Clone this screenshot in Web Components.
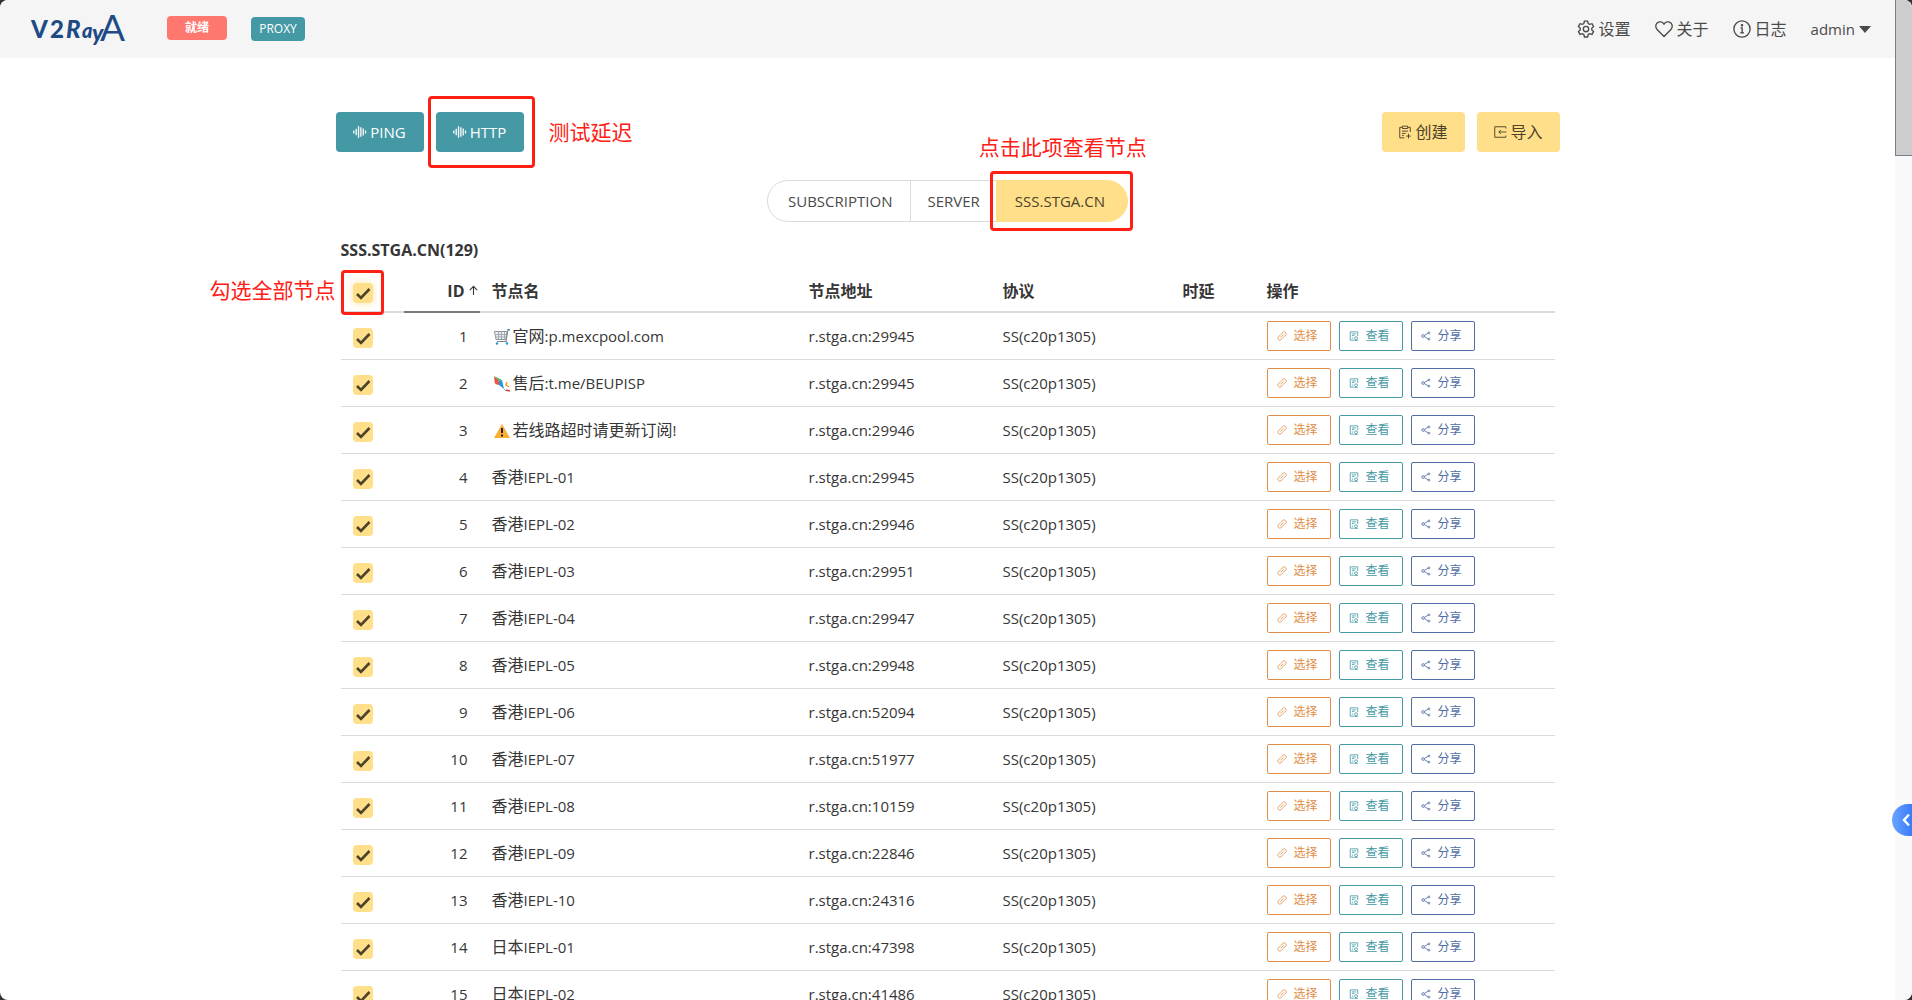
<!DOCTYPE html>
<html lang="zh-CN">
<head>
<meta charset="utf-8">
<title>v2rayA</title>
<style>
html,body{margin:0;height:100%;overflow:hidden;background:#333}
body{font-family:"Open Sans","Noto Sans CJK SC",sans-serif;font-size:15px;line-height:24px;color:#363636}
</style>
</head>
<body>
<app-window></app-window>
<script>
const ICONS = {
  gear:'<path d="M9.900 1.500h4.200l.8 3.200 1.900 1.100 3.200-.9 2.100 3.700-2.400 2.300v2.300l2.400 2.300-2.100 3.700-3.200-.9-1.900 1.100-.8 3.200H9.900l-.8-3.200-1.900-1.100-3.200.9-2.100-3.700 2.400-2.300v-2.300L1.900 8.600 4 4.900l3.200.9 1.900-1.100z"/><circle cx="12" cy="12.100" r="3.600"/>',
  heart:'<path d="M12 22 2.800 12.600C.3 10 .5 6.200 2.800 4 5.500 1.500 9.800 2 12 5.400 14.200 2 18.500 1.500 21.200 4c2.300 2.200 2.500 6 0 8.600z"/>',
  info:'<circle cx="12" cy="12" r="10.800"/><path d="M10 10.500h2.200v6.500M9.800 17h4.600"/><circle cx="12" cy="7" r=".8" fill="currentColor"/>',
  wave:'<path stroke-width="2.200" d="M1.500 9.500v5M5.500 6.500v11M9.500 2v20M13.500 4v16M17.500 6v12M21.500 9.500v5"/>',
  clip:'<path d="M7 4H3v18h8M17 4h4v8M7.500 2h9v4h-9zM7 10.500h10M7 14.500h6M7 18h3M18 15v8M14 19h8"/>',
  enter:'<path d="M22 6V3H3v18h19v-3M10 12h13M13.500 8.500 10 12l3.500 3.500"/>',
  link:'<path d="M8.500 15.500l7-7M9 8.500l6-6c3.500-2.500 9 3 6.500 6.500l-6 6M15 15.500l-6 6c-3.500 2.500-9-3-6.500-6.500l6-6"/>',
  view:'<path d="M12 22H3V2h18v10M7 7h10M7 11h6M7 17h3"/><circle cx="17" cy="17.500" r="3.500"/><path d="M13 23h8"/>',
  share:'<circle cx="5" cy="12" r="3.200"/><circle cx="19" cy="4.500" r="2.200"/><circle cx="19" cy="19.500" r="2.200"/><path d="m8 10.500 9-5M8 13.500l9 5"/>',
  up:'<path d="M12 22V3M4 11l8-8 8 8"/>'
};
const icon = (n, s, w = 2) => `<svg width="${s}" height="${s}" viewBox="0 0 24 24" fill="none" stroke="currentColor" stroke-width="${w}" aria-hidden="true">${ICONS[n]}</svg>`;
/* Chinese runs are set one size above the Latin ones */
const mixed = t => t.replace(/[\u4e00-\u9fff]+/g, m => `<span class="zh">${m}</span>`);
const BASE = `<style>*{box-sizing:border-box}:host{display:block}button,a,input{font:inherit;color:inherit}button{cursor:pointer;border:0;margin:0}a{text-decoration:none}svg{flex:none}.zh{font-size:16px}</style>`;
const define = (name, html, setup) => customElements.define(name, class extends HTMLElement {
  connectedCallback() {
    if (this.shadowRoot) return;
    this.attachShadow({mode:'open'}).innerHTML = BASE + (typeof html === 'function' ? html(this) : html);
    if (setup) setup(this);
  }
});

define('red-note', `<style>
:host{position:absolute;border:3px solid #ff2015;border-radius:4px;pointer-events:none}
span{position:absolute;color:#ff2015;font-size:21px;line-height:28px;font-weight:400;white-space:nowrap}
:host([side=right]) span{left:100%;top:50%;margin:-14px 0 0 17px}
:host([side=left]) span{right:100%;top:50%;margin:-17px 8px 0 0}
:host([side=top]) span{bottom:100%;left:-14px;margin-bottom:13px}
</style><span><slot></slot></span>`);

define('brand-logo', `<style>svg{display:block}text{fill:#1f4b85;font-family:Lato,sans-serif;font-weight:900}.slant{font-style:italic}</style>
<svg width="96" height="44" viewBox="0 0 96 44" role="img" aria-label="V2RayA"><text x="1" y="31" font-size="24">V<tspan x="20">2</tspan><tspan x="36" class="slant">R</tspan><tspan x="52" font-size="20" class="slant">a</tspan><tspan x="62" y="34" font-size="23" class="slant">y</tspan><tspan x="70" y="34" font-size="37" font-weight="400">A</tspan></text></svg>`);

define('status-tag', `<style>:host{border-radius:4px;font-size:12px;line-height:24px;color:#fff;text-align:center;background:var(--tag)}</style><slot></slot>`);

define('nav-link', el => `<style>a{display:flex;align-items:center;gap:4px;color:#4a4a4a;font-size:var(--nav-size,16px)}i{border:6px solid transparent;border-top:7px solid #4a4a4a;border-bottom:0}</style>
<a href="#">${el.hasAttribute('icon') ? icon(el.getAttribute('icon'), 18, 1.800) : ''}<slot></slot>${el.hasAttribute('caret') ? '<i></i>' : ''}</a>`);

define('top-bar', `<style>
:host{background:#f5f5f5}
nav{height:58px;display:flex;align-items:center;padding:0 24px 0 30px}
.ready{width:60px;margin:-2px 24px 0 41px;font-weight:700;--tag:#ff7870}
.proxy{width:54px;--tag:#4599a5}
.links{margin-left:auto;display:flex;gap:24px}
.user{--nav-size:15px}
</style><nav><brand-logo></brand-logo><status-tag class="ready">就绪</status-tag><status-tag class="proxy">PROXY</status-tag>
<div class="links"><nav-link icon="gear">设置</nav-link><nav-link icon="heart">关于</nav-link><nav-link icon="info">日志</nav-link><nav-link class="user" caret>admin</nav-link></div></nav>`);

define('tool-button', el => `<style>
:host{position:relative}
button{display:flex;align-items:center;justify-content:center;gap:3px;height:40px;min-width:88px;border-radius:4px;background:#4599a5;color:#fff;padding:0 16px}
:host([tone=warm]) button{background:#ffdf8a;color:#4d4329;min-width:83px;padding:0 8px;font-size:16px}
</style><button type="button">${icon(el.getAttribute('icon'), 14, 1.600)}<slot></slot></button><slot name="note"></slot>`);

define('action-bar', `<style>
:host{display:flex;gap:12px}
.gap{flex:1}
red-note{left:-8px;right:-11px;top:-16px;bottom:-16px}
</style><tool-button icon="wave">PING</tool-button><tool-button icon="wave">HTTP<red-note slot="note" side="right">测试延迟</red-note></tool-button><div class="gap"></div>
<tool-button tone="warm" icon="clip">创建</tool-button><tool-button tone="warm" icon="enter">导入</tool-button>`);

define('server-tabs', `<style>
:host{display:flex;justify-content:center}
div{display:flex;position:relative}
a{height:42px;line-height:40px;border:1px solid #dbdbdb;padding:0 16px;margin-right:-1px;color:#4a4a4a}
a:first-child{border-radius:21px 0 0 21px;padding:0 18px 0 20px}
a.on{border-radius:0 21px 21px 0;background:#ffdf8a;border-color:#ffdf8a;color:#4d4329;padding:0 22px 0 18px;margin:0}
section{position:relative;display:flex}
red-note{left:-6px;right:-5px;top:-9px;bottom:-9px}
</style><div><a href="#">SUBSCRIPTION</a><a href="#">SERVER</a><section><a class="on" href="#">SSS.STGA.CN</a><red-note side="top">点击此项查看节点</red-note></section></div>`);

define('check-box', el => `<style>
label{position:relative;display:block;width:20px;height:20px}
input{appearance:none;display:block;margin:0;width:20px;height:20px;border-radius:4px;background:#ffdf8a}
:host([glow]) input{box-shadow:0 0 8px #ffdf8acc}
svg{position:absolute;inset:0;pointer-events:none}
</style><label><input type="checkbox" checked aria-label="${el.getAttribute('label')}"><svg width="20" height="20" viewBox="0 0 20 20" fill="none" stroke="#4d4329" stroke-width="2.600"><path d="m4 11 4 4 8.500-9"/></svg></label>`);

define('row-action', el => `<style>
button{display:flex;align-items:center;justify-content:center;gap:6px;width:64px;height:30px;border:1px solid var(--tone);border-radius:2px;background:#fff;color:var(--tone);font-size:12px;padding:0 2px 0 0}
</style><button type="button">${icon(el.getAttribute('icon'), 10)}<slot></slot></button>`);

define('name-mark', el => {
  const art = {
    cart:'<path fill="#eceff1" stroke="#8c969c" d="M.5 2.500h12.500l-1 8H2z"/><path fill="none" stroke="#a2abb0" d="M1.500 5.500h11M2 8h10M4.500 3v7M7.500 3v7M10.500 3v7"/><path fill="none" stroke="#7d878d" d="m12 12 2-11M3 12.500h10"/><path fill="none" stroke="#2e7fb8" stroke-width="1.500" d="m13.500 1 2.500-.5"/><circle cx="3" cy="14.500" r="1.200" fill="#2196d8"/><circle cx="13" cy="14.500" r="1.200" fill="#2196d8"/>',
    kite:'<path fill="#f04a3c" d="m0 0 1 8 4-3z"/><path fill="#4caf50" d="m0 0 8 4-3 1z"/><path fill="#1e9be0" d="m5 5 3-1 2 9-5-4z"/><path fill="#f04a3c" d="m1 8 4-3 0 4z"/><path fill="none" stroke="#9aa" d="m10 13 2 2"/><path fill="none" stroke="#f0a020" stroke-width="1.500" d="m13 6-1 3 3 2"/><path fill="none" stroke="#e53935" stroke-width="1.500" d="m12 14 4 1"/>',
    warn:'<path fill="#fbae2f" d="M8 1 16 15H0z"/><path stroke="#222" stroke-width="2" d="M8 5v5M8 11.500v2"/>'
  };
  return `<style>:host{display:inline-block;vertical-align:-3px;margin:0 3px 0 2px}svg{display:block}</style><svg width="16" height="16" viewBox="0 0 16 16">${art[el.getAttribute('kind')]}</svg>`;
});

const ROWS = [
 ['官网:p.mexcpool.com',29945,'cart'],['售后:t.me/BEUPISP',29945,'kite'],['若线路超时请更新订阅!',29946,'warn'],
 ['香港IEPL-01',29945],['香港IEPL-02',29946],['香港IEPL-03',29951],['香港IEPL-04',29947],['香港IEPL-05',29948],
 ['香港IEPL-06',52094],['香港IEPL-07',51977],['香港IEPL-08',10159],['香港IEPL-09',22846],['香港IEPL-10',24316],
 ['日本IEPL-01',47398],['日本IEPL-02',41486]
];
define('node-table', () => `<style>
h2{margin:0;font-size:16px;line-height:24px;font-weight:700}
table{width:100%;margin-top:8px;border-collapse:separate;border-spacing:0;table-layout:fixed}
th,td{text-align:left;padding:0 12px;white-space:nowrap}
th{height:43px;border-bottom:2px solid #dbdbdb;font-weight:700;font-size:16px;line-height:24px}
td{height:47px;border-bottom:1px solid #dbdbdb}
.c{width:63px;position:relative}.i{width:76px}.n{width:317px}.a{width:194px}.p{width:180px}.d{width:84px}
th.i{border-color:#7a7a7a;padding:0}
th.i div{display:flex;justify-content:flex-end;align-items:center;gap:3px;padding-right:1px}
td.i{text-align:right}
th check-box{padding-top:4px}td check-box{padding-top:3px}
.ops{display:flex;gap:8px}
red-note{left:0;width:43px;top:0;height:45px}
</style><h2>SSS.STGA.CN(129)</h2>
<table><thead><tr><th class="c"><check-box glow label="全选"></check-box><red-note side="left">勾选全部节点</red-note></th><th class="i"><div>ID${icon('up', 11, 2.400)}</div></th><th class="n">节点名</th><th class="a">节点地址</th><th class="p">协议</th><th class="d">时延</th><th>操作</th></tr></thead>
<tbody>${ROWS.map(([n, p, k], i) => `<tr><td class="c"><check-box label="${i + 1}"></check-box></td><td class="i">${i + 1}</td><td>${k ? `<name-mark kind="${k}"></name-mark>` : ''}${mixed(n)}</td><td>r.stga.cn:${p}</td><td>SS(c20p1305)</td><td></td><td><div class="ops"><row-action icon="link" style="--tone:#e08e45">选择</row-action><row-action icon="view" style="--tone:#4599a5">查看</row-action><row-action icon="share" style="--tone:#506da4">分享</row-action></div></td></tr>`).join('')}</tbody></table>`);

define('scroll-rail', `<style>
:host{width:17px;background:#f9f9f9}
div{height:156px;background:#cdcdcd;border:1px solid #74808c;border-width:0 0 1px 1px}
</style><div></div>`);

define('side-handle', `<style>
:host{position:absolute;right:0;top:804px}
button{display:flex;align-items:center;justify-content:flex-end;width:20px;height:32px;padding:0 2px 0 0;border-radius:16px 0 0 16px;background:linear-gradient(90deg,#6ba3ff,#3a7bf8);color:#fff}
</style><button type="button" aria-label="展开"><svg width="8" height="14" viewBox="0 0 8 14" fill="none" stroke="#fff" stroke-width="2.400"><path d="M7 1.500 2 7l5 5.500"/></svg></button>`);

define('app-window', `<style>
:host{display:flex;position:relative;height:100vh;overflow:hidden;background:#fff;border-radius:8px}
.page{flex:1;min-width:0}
main{max-width:1224px;margin:0 auto;padding-top:54px}
server-tabs{margin-top:28px}
node-table{margin:16px 5px 0}
</style><div class="page"><top-bar></top-bar><main><action-bar></action-bar><server-tabs></server-tabs><node-table></node-table></main></div><scroll-rail></scroll-rail><side-handle></side-handle>`);
</script>
</body>
</html>
